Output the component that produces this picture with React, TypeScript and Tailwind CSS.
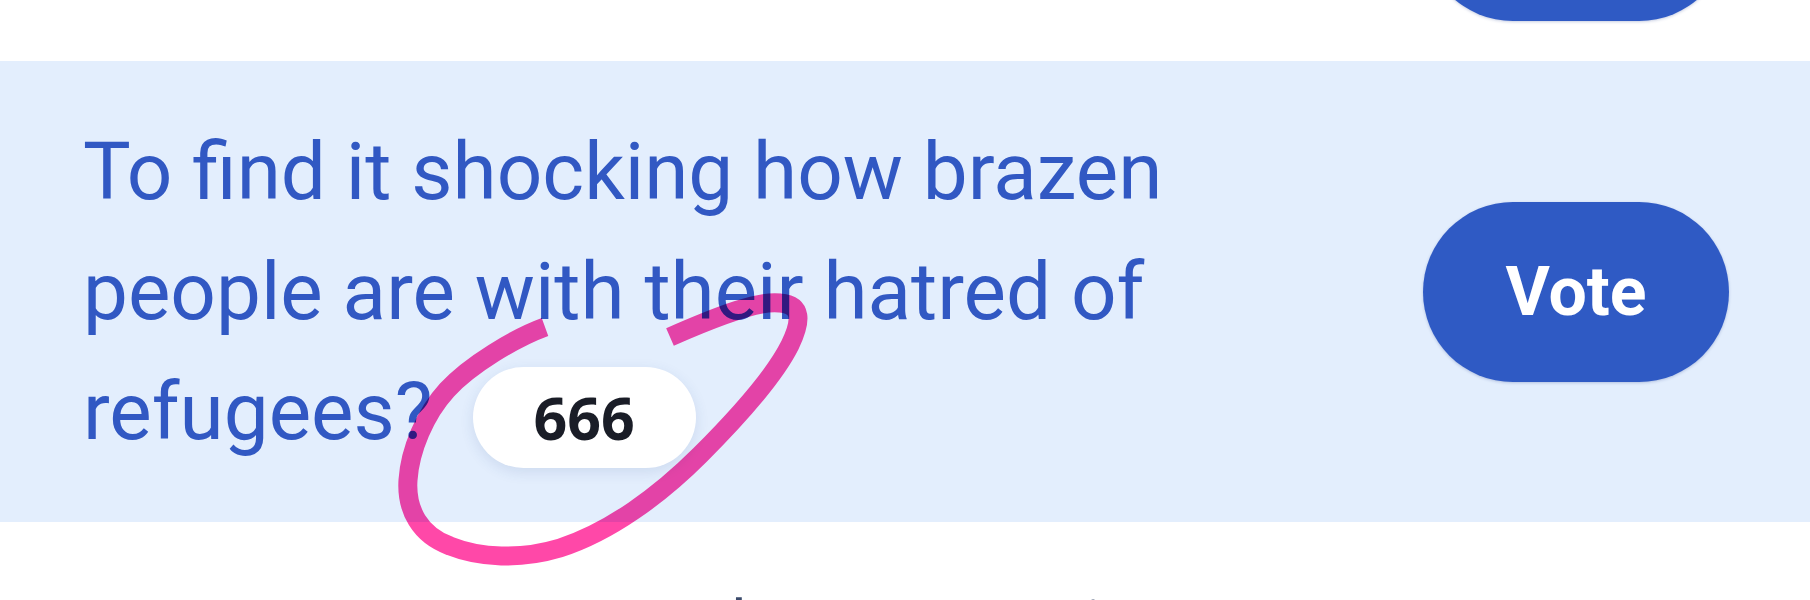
import React from 'react';

const VoteButton: React.FC<{ className?: string }> = ({ className = '' }) => (
  <button
    className={`h-[180px] w-[306px] shrink-0 rounded-full bg-[#2f5ac4] text-white font-bold text-[68px] leading-none shadow-[0_1px_3px_rgba(30,60,140,0.25)] ${className}`}
    style={{ fontFamily: 'Roboto, "Liberation Sans", sans-serif' }}
  >
    Vote
  </button>
);

export default function App() {
  return (
    <div
      className="relative w-full h-[600px] overflow-hidden bg-white"
      style={{ fontFamily: 'Roboto, "Liberation Sans", sans-serif' }}
    >
      {/* previous row, mostly scrolled out */}
      <div className="h-[61px] flex items-end justify-end pr-[81px] pb-[40px]">
        <VoteButton />
      </div>

      {/* highlighted question */}
      <div className="h-[461px] bg-[#e3eefd] flex items-center justify-between pl-[83px] pr-[81px]">
        <p className="w-[1120px] text-[80px] leading-[120px] text-[#3158c3]">
          To find it shocking how brazen people are with their hatred of refugees?
          <span
            className="inline-flex items-center justify-center align-middle ml-[40px] h-[101px] w-[223px] rounded-full bg-white shadow-[0_4px_14px_rgba(40,70,140,0.12)] text-[59px] font-bold leading-none text-[#1a1d27]"
            style={{ fontFamily: '"Open Sans", "Noto Sans", sans-serif' }}
          >
            666
          </span>
        </p>
        <VoteButton />
      </div>

      {/* next row peeking in */}
      <div className="pt-[71px] flex justify-center">
        <p className="text-[64px] leading-none text-[#3a4a6b]">Load more questions</p>
      </div>

      {/* hand-drawn annotation */}
      <svg
        className="absolute inset-0 pointer-events-none mix-blend-multiply"
        width="1810"
        height="600"
        viewBox="0 0 1810 600"
      >
        <path
          d="M545 327 C515 338 470 365 447 390 C425 414 410 450 408 480 C406 510 420 535 450 546 C480 558 520 560 560 548 C610 532 660 495 700 455 C740 415 775 375 790 345 C802 320 802 305 780 303 C760 300 720 315 670 337"
          fill="none"
          stroke="#ff48a8"
          strokeWidth="19"
          strokeLinecap="butt"
          strokeLinejoin="round"
        />
      </svg>
    </div>
  );
}
